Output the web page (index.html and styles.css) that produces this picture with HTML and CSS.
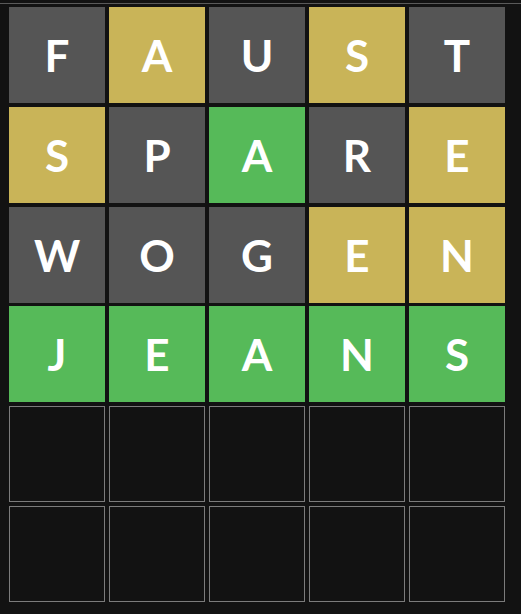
FILE: index.html
```html
<!DOCTYPE html>
<html lang="de">
<head>
  <meta charset="UTF-8">
  <title>Wortspiel</title>
  <link rel="stylesheet" href="styles.css">
</head>
<body>

<div class="topbar"></div>

<div id="board">
  <div class="row">
    <div class="tile absent">F</div>
    <div class="tile present">A</div>
    <div class="tile absent">U</div>
    <div class="tile present">S</div>
    <div class="tile absent">T</div>
  </div>
  <div class="row">
    <div class="tile present">S</div>
    <div class="tile absent">P</div>
    <div class="tile correct">A</div>
    <div class="tile absent">R</div>
    <div class="tile present">E</div>
  </div>
  <div class="row">
    <div class="tile absent">W</div>
    <div class="tile absent">O</div>
    <div class="tile absent">G</div>
    <div class="tile present">E</div>
    <div class="tile present">N</div>
  </div>
  <div class="row">
    <div class="tile correct">J</div>
    <div class="tile correct">E</div>
    <div class="tile correct">A</div>
    <div class="tile correct">N</div>
    <div class="tile correct">S</div>
  </div>
  <div class="row">
    <div class="tile empty"></div>
    <div class="tile empty"></div>
    <div class="tile empty"></div>
    <div class="tile empty"></div>
    <div class="tile empty"></div>
  </div>
  <div class="row">
    <div class="tile empty"></div>
    <div class="tile empty"></div>
    <div class="tile empty"></div>
    <div class="tile empty"></div>
    <div class="tile empty"></div>
  </div>
</div>

</body>
</html>
```

FILE: styles.css
```css
body {
  margin: 0;
  background-color: #121212;
  font-family: Lato, 'Open Sans', sans-serif;
}
.topbar {
  height: 3px;
  border-bottom: 1px solid #5a5a5a;
}
#board {
  display: grid;
  grid-template-rows: repeat(6, 96px);
  gap: 3.8px;
  margin: 3px 0 0 9px;
  width: 496px;
}
.row {
  display: grid;
  grid-template-columns: repeat(5, 96px);
  gap: 4px;
}
.tile {
  display: flex;
  align-items: center;
  justify-content: center;
  font-size: 44px;
  font-weight: 700;
  color: white;
  box-sizing: border-box;
}
.tile.absent {
  background-color: #555555;
}
.tile.present {
  background-color: #c9b458;
}
.tile.correct {
  background-color: #56ba59;
}
.tile.empty {
  border: 1px solid #7b7b7b;
}
```
